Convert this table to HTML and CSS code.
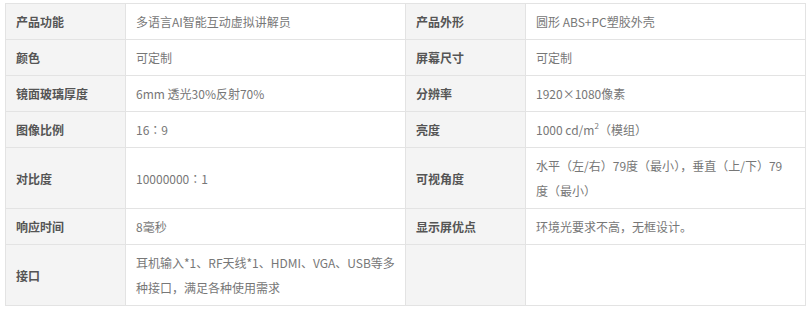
FILE: index.html
```html
<!DOCTYPE html>
<html lang="zh-CN">
<head>
<meta charset="utf-8">
<title>产品参数</title>
<link rel="stylesheet" href="styles.css">
</head>
<body>
<table class="spec">
  <colgroup>
    <col class="c-label"><col class="c-value"><col class="c-label"><col class="c-value2">
  </colgroup>
  <tbody>
    <tr><th>产品功能</th><td>多语言AI智能互动虚拟讲解员</td><th>产品外形</th><td>圆形 ABS+PC塑胶外壳</td></tr>
    <tr><th>颜色</th><td>可定制</td><th>屏幕尺寸</th><td>可定制</td></tr>
    <tr><th>镜面玻璃厚度</th><td>6mm 透光30%反射70%</td><th>分辨率</th><td>1920×1080像素</td></tr>
    <tr><th>图像比例</th><td>16<span class="p">：</span>9</td><th>亮度</th><td>1000 cd/m<sup>2</sup><span class="p">（</span>模组<span class="p">）</span></td></tr>
    <tr><th>对比度</th><td>10000000<span class="p">：</span>1</td><th>可视角度</th><td>水平<span class="p">（</span>左/右<span class="p">）</span>79度<span class="p">（</span>最小<span class="p">），</span>垂直<span class="p">（</span>上/下<span class="p">）</span>79<br>度<span class="p">（</span>最小<span class="p">）</span></td></tr>
    <tr><th>响应时间</th><td>8毫秒</td><th>显示屏优点</th><td>环境光要求不高，无框设计。</td></tr>
    <tr><th>接口</th><td>耳机输入*1、RF天线*1、HDMI、VGA、USB等多种接口，满足各种使用需求</td><th></th><td></td></tr>
  </tbody>
</table>
</body>
</html>
```

FILE: styles.css
```css
html, body {
  margin: 0;
  padding: 0;
  background: #fff;
}
body {
  padding: 3px 0 0 5px;
  font-family: "Noto Sans CJK SC", "Microsoft YaHei", sans-serif;
  font-size: 12px;
}
.spec {
  border-collapse: collapse;
  width: 800px;
  table-layout: fixed;
}
.c-label { width: 120px; }
.c-value { width: 280px; }
.c-value2 { width: 280px; }
.spec th, .spec td {
  border: 1px solid #e3e3e3;
  padding: 5px 10px;
  line-height: 25px;
  text-align: left;
  vertical-align: middle;
}
.spec th {
  background: #f4f4f4;
  color: #555;
  font-weight: bold;
}
.spec td {
  color: #777;
  font-weight: normal;
}
.spec .p {
  font-family: "Noto Sans CJK TC", sans-serif;
}
.spec sup {
  font-size: 8px;
  line-height: 0;
  vertical-align: 6px;
}
```
